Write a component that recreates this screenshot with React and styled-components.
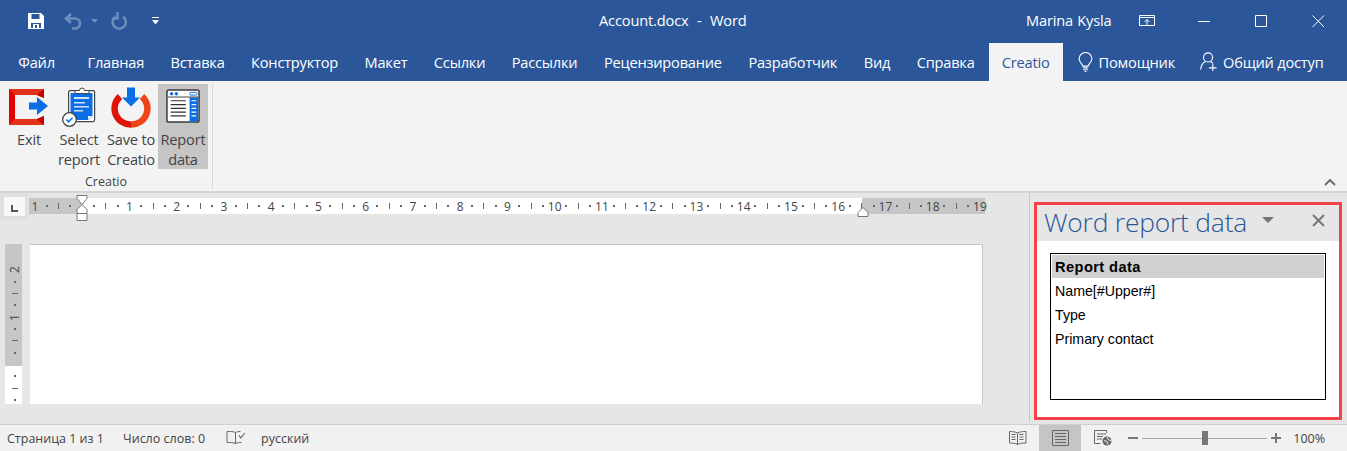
import styled, { createGlobalStyle } from 'styled-components';

const GlobalStyle = createGlobalStyle`
  html, body {
    margin: 0;
    padding: 0;
    background: #e6e6e6;
  }
  * {
    box-sizing: border-box;
  }
`;

const UI_FONT = `'Open Sans', 'Noto Sans', sans-serif`;
const ARIAL = `'Liberation Sans', Arial, sans-serif`;

const tabs = ['Главная', 'Вставка', 'Конструктор', 'Макет', 'Ссылки', 'Рассылки', 'Рецензирование', 'Разработчик', 'Вид', 'Справка'];

const Window = styled.div`
  width: 1347px;
  height: 451px;
  display: flex;
  flex-direction: column;
  overflow: hidden;
  font-family: ${UI_FONT};
`;

const TitleBar = styled.div`
  height: 42px;
  flex: none;
  background: #2b579a;
  color: #fff;
  display: flex;
  align-items: center;
  font-size: 14.6px;
`;

const TitleIcon = styled.span`
  display: flex;
  margin-left: ${(p) => p.$left}px;
  opacity: ${(p) => p.$faded ? 0.32 : 1};
`;

const TitleText = styled.span`
  margin-left: ${(p) => p.$left}px;
  margin-top: -2px;
  width: ${(p) => p.$width}px;
  white-space: pre;
  letter-spacing: -0.15px;
  word-spacing: 0.6px;
`;

const TabBar = styled.div`
  height: 39px;
  flex: none;
  background: #2b579a;
  display: flex;
  align-items: stretch;
  padding-left: 5px;
`;

const Tab = styled.div`
  padding: 0 ${(p) => p.$right ?? 13.25}px 0 ${(p) => p.$pad ?? 13.25}px;
  margin-top: ${(p) => p.$active ? 1 : 0}px;
  margin-left: ${(p) => p.$left ?? 0}px;
  display: flex;
  align-items: center;
  gap: ${(p) => p.$gap ?? 0}px;
  font-size: 14.6px;
  letter-spacing: -0.2px;
  white-space: nowrap;
  color: ${(p) => p.$active ? '#2b579a' : '#fff'};
  background: ${(p) => p.$active ? '#f3f3f3' : 'transparent'};
`;

const Ribbon = styled.div`
  height: 112px;
  flex: none;
  background: #f3f3f3;
  border-bottom: 2px solid #d4d4d4;
  display: flex;
  justify-content: space-between;
  padding: 3px 0 0 0;
`;

const RibbonGroup = styled.div`
  width: 213px;
  height: 105px;
  border-right: 1px solid #d9d9d9;
  display: flex;
  flex-direction: column;
`;

const RibbonButtons = styled.div`
  display: flex;
  padding-left: 8px;
  height: 85px;
`;

const RibbonButton = styled.div`
  width: ${(p) => p.$width}px;
  margin-left: ${(p) => p.$left ?? 0}px;
  height: 85px;
  display: flex;
  flex-direction: column;
  align-items: center;
  background: ${(p) => p.$active ? '#c5c5c5' : 'transparent'};
  color: #444;
  font-size: 14.6px;
  line-height: 20px;
  letter-spacing: -0.2px;
  text-align: center;
  white-space: nowrap;
`;

const RibbonIcon = styled.div`
  height: 45px;
  flex: none;
  display: flex;
  align-items: flex-start;
  justify-content: center;
  padding-top: ${(p) => p.$top ?? 3}px;
`;

const GroupLabel = styled.div`
  text-align: center;
  font-size: 12.5px;
  line-height: 16px;
  margin-top: 5px;
  color: #444;
`;

const Collapse = styled.div`
  align-self: flex-end;
  padding: 0 11px 5px 0;
  display: flex;
`;

const Main = styled.div`
  flex: 1;
  display: flex;
  background: #e6e6e6;
  min-height: 0;
`;

const DocArea = styled.div`
  width: 1029px;
  flex: none;
  position: relative;
  display: flex;
  flex-direction: column;
`;

const RulerRow = styled.div`
  display: flex;
  height: 30px;
  align-items: flex-start;
`;

const TabStop = styled.div`
  width: 28px;
  height: 27px;
  margin-right: 1px;
  background: #e0e0e0;
  padding: 4px;
`;

const TabStopInner = styled.div`
  width: 21px;
  height: 19px;
  background: #f8f8f8;
  display: flex;
  align-items: flex-end;
  padding: 0 0 4px 7px;
`;

const CornerMark = styled.div`
  width: 7px;
  height: 7px;
  border-left: 2px solid #555;
  border-bottom: 2px solid #555;
`;

const HRuler = styled.div`
  width: 956px;
  height: 16px;
  margin-top: 5px;
  position: relative;
  display: flex;
  overflow: visible;
  background: linear-gradient(to right, #c6c6c6 53px, #fff 53px, #fff 833px, #c6c6c6 833px);
`;

const RulerCell = styled.span`
  flex: none;
  width: 11.8125px;
  height: 16px;
  display: flex;
  align-items: center;
  justify-content: center;
  font-size: 12px;
  color: #444;
`;

const Dot = styled.i`
  width: 2px;
  height: 2px;
  background: #666;
  display: block;
`;

const Tick = styled.i`
  width: 1px;
  height: 6px;
  background: #666;
  display: block;
`;

const Marker = styled.svg`
  position: absolute;
  top: -3px;
  left: ${(p) => p.$left}px;
`;

const DocRow = styled.div`
  display: flex;
  margin-top: 21px;
  height: 160px;
`;

const VRuler = styled.div`
  width: 17px;
  margin: 0 8px 0 5px;
  height: 160px;
  display: flex;
  flex-direction: column;
  align-items: center;
  background: linear-gradient(to bottom, #c6c6c6 122px, #fff 122px);
  padding: 20px 0 0 2px;
  flex: none;
`;

const VCell = styled.span`
  flex: none;
  width: 15px;
  height: 11.8125px;
  display: flex;
  align-items: center;
  justify-content: center;
  font-size: 12px;
  color: #444;
`;

const VNumber = styled.span`
  display: block;
  transform: rotate(-90deg);
`;

const VDot = styled.i`
  width: 2px;
  height: 2px;
  background: #666;
  display: block;
`;

const VTick = styled.i`
  width: 6px;
  height: 1px;
  background: #666;
  display: block;
`;

const Page = styled.div`
  width: 953px;
  height: 160px;
  background: #fff;
  border-top: 1px solid #c6c6c6;
  border-right: 1px solid #c6c6c6;
`;

const PaneWrap = styled.div`
  flex: 1;
  border-left: 1px solid #c6c6c6;
  padding: 9px 5px 4px 4px;
  height: 229px;
`;

const Pane = styled.div`
  height: 218px;
  border: 3px solid #f34349;
  background: #fff;
  display: flex;
  flex-direction: column;
`;

const PaneHead = styled.div`
  height: 36px;
  background: #e6e6e6;
  display: flex;
  align-items: center;
  padding: 0 14px 0 7px;
`;

const PaneTitle = styled.div`
  font-size: 26.4px;
  font-weight: 300;
  color: #2b579a;
  letter-spacing: -0.2px;
  white-space: nowrap;
  line-height: 36px;
  margin-top: -3px;
`;

const PaneMenu = styled.div`
  width: 0;
  height: 0;
  margin: -6px 0 0 15px;
  border-left: 6px solid transparent;
  border-right: 6px solid transparent;
  border-top: 6px solid #767676;
`;

const PaneClose = styled.svg`
  margin: -5px 0 0 auto;
`;

const PaneBody = styled.div`
  flex: 1;
  padding: 12px 13px 17px 13px;
`;

const DataTable = styled.div`
  height: 147px;
  border: 1px solid #000;
  padding: 1px;
  font-family: ${ARIAL};
  font-size: 14.2px;
  color: #000;
`;

const DataHead = styled.div`
  height: 23px;
  line-height: 24px;
  padding-left: 3px;
  font-weight: 700;
  font-size: 14.67px;
  letter-spacing: 0.4px;
  background: #d0d0d0;
`;

const DataRow = styled.div`
  height: 24px;
  line-height: 27px;
  padding-left: 3px;
`;

const StatusBar = styled.div`
  height: 27px;
  flex: none;
  background: #f1f1f1;
  border-top: 1px solid #cfcfcf;
  display: flex;
  align-items: center;
  font-size: 12.5px;
  color: #444;
`;

const StatusText = styled.span`
  margin-left: ${(p) => p.$left}px;
  white-space: nowrap;
`;

const StatusIcon = styled.span`
  display: flex;
  margin-left: ${(p) => p.$left}px;
`;

const ViewButton = styled.span`
  width: 42px;
  height: 26px;
  margin-left: 12px;
  display: flex;
  align-items: center;
  justify-content: center;
  background: #c5c5c5;
`;

const ZoomMark = styled.span`
  margin-left: ${(p) => p.$left}px;
  width: 10px;
  height: 10px;
  flex: none;
  position: relative;
  display: flex;
  align-items: center;
`;

const ZoomBar = styled.span`
  width: 10px;
  height: 2px;
  background: #777;
`;

const ZoomStem = styled.span`
  position: absolute;
  left: 4px;
  top: 0;
  width: 2px;
  height: 10px;
  background: #777;
`;

const ZoomTrack = styled.div`
  width: 125px;
  height: 1px;
  margin-left: 4px;
  background: #a8a8a8;
  position: relative;
`;

const ZoomThumb = styled.div`
  position: absolute;
  left: 60px;
  top: -7px;
  width: 6px;
  height: 14px;
  background: #777;
`;

const SaveIcon = () => (
  <svg width="18" height="18" viewBox="0 0 18 18">
    <path d="M1 1h13l3 3v13H1z" fill="#fff" />
    <path d="M4.500 2h8v5h-8z" fill="#2b579a" />
    <path d="M4 11h10v5H4z" fill="#2b579a" />
    <path d="M6 12h6v4H6z" fill="#fff" />
    <path d="M8 13h2v3H8z" fill="#2b579a" />
  </svg>
);

const UndoIcon = () => (
  <svg width="19" height="18" viewBox="0 0 19 18" fill="none" stroke="#fff" strokeWidth="2.600">
    <path d="M7 2 2 6.500 7 11" />
    <path d="M3 6.500h8a5 5 0 0 1 5 5 5 5 0 0 1-5 5H8" />
  </svg>
);

const RedoIcon = () => (
  <svg width="18" height="18" viewBox="0 0 19 18" fill="none" stroke="#fff" strokeWidth="2.600">
    <path d="M6 4.200a7 7 0 1 0 8 .3" />
    <path d="M8 0v7H2" transform="translate(0 -0.5)" />
  </svg>
);

const SmallCaret = () => (
  <svg width="7" height="4" viewBox="0 0 7 4"><path d="M0 0h7L3.500 4z" fill="#fff" /></svg>
);

const CustomizeIcon = () => (
  <svg width="7" height="8" viewBox="0 0 7 8" fill="#fff">
    <path d="M0 0h7v1H0z" />
    <path d="M0 3h7L3.500 7.500z" />
  </svg>
);

const DisplayIcon = () => (
  <svg width="16" height="12" viewBox="0 0 16 12" fill="none" stroke="#fff">
    <path d="M.5.500h15v10H.5zM.5 2.500h15" />
    <path d="M8 10V4.500M5.500 7 8 4.500 10.500 7" />
  </svg>
);

const MinIcon = () => (
  <svg width="13" height="12" viewBox="0 0 13 12"><path d="M0 6.500h12" stroke="#fff" /></svg>
);

const MaxIcon = () => (
  <svg width="13" height="13" viewBox="0 0 13 13"><path d="M.5.500h11v11H.5z" fill="none" stroke="#fff" /></svg>
);

const CloseIcon = () => (
  <svg width="13" height="13" viewBox="0 0 13 13"><path d="M.5.500l11.500 11.500M12 .5.500 12" fill="none" stroke="#fff" /></svg>
);

const BulbIcon = () => (
  <svg width="15" height="20" viewBox="0 0 16 22" fill="none" stroke="#fff" strokeWidth="1.200">
    <path d="M5 15.500C4.500 12.500 1 11.500 1 7.500a7 7 0 0 1 14 0c0 4-3.500 5-4 8z" />
    <path d="M5.500 17.500h5M5.500 19.500h5M7 21.500h2" />
  </svg>
);

const ShareIcon = () => (
  <svg width="19" height="19" viewBox="0 0 19 21" fill="none" stroke="#fff" strokeWidth="1.200">
    <circle cx="9" cy="6" r="5" />
    <path d="M.8 19.500c.5-5 3-8 5.500-9M11.500 10.500c1 .4 2 1 2.800 2" />
    <path d="M10 17.500h8.500M14.300 13v8.500" />
  </svg>
);

const ExitIcon = () => (
  <svg width="40" height="36" viewBox="0 0 40 36">
    <path d="M0 0h35v9l-7-3H6v24h22l7-3v9H0z" fill="#e60000" />
    <path d="M0 0h35l-7 6H6z" fill="#e2321a" />
    <path d="M0 36h35l-7-6H6z" fill="#e2321a" />
    <path d="M35 0v9l-7-3z" fill="#c40000" />
    <path d="M35 36v-9l-7 3z" fill="#c40000" />
    <path d="M20 13.500h8V8l11 9-11 9v-5.500h-8z" fill="#0a6ee6" />
  </svg>
);

const SelectIcon = () => (
  <svg width="34" height="40" viewBox="0 0 34 40">
    <rect x="6.600" y="3.600" width="26" height="31" rx="1.500" fill="#fff" stroke="#444" strokeWidth="1.200" />
    <path d="M8.500 6h22v23l-4 4h-18z" fill="#0a6ee6" />
    <path d="M12 10h15v2H12zM12 15h11v1.500H12zM12 19h15v1.500H12zM12 23h9v1.500h-9z" fill="#cfe4fb" />
    <path d="M26 33v-4h4z" fill="#fff" />
    <path d="M13 3.500h4.500a2.500 2.500 0 0 1 5 0H27v3H13z" fill="#fff" stroke="#444" />
    <circle cx="7.500" cy="32.500" r="6.800" fill="#fff" stroke="#444" strokeWidth="1.300" />
    <path d="M4.300 32.500l2.300 2.300 4-4" fill="none" stroke="#0a6ee6" strokeWidth="1.600" />
  </svg>
);

const SaveToIcon = () => (
  <svg width="40" height="41" viewBox="0 0 40 41">
    <path d="M9 9.500A16 16 0 0 0 20 37.500" fill="none" stroke="#e0150a" strokeWidth="6.500" />
    <path d="M20 37.500A16 16 0 0 0 31 9.500" fill="none" stroke="#ef4418" strokeWidth="6.500" />
    <path d="M16 .5h8v10h5L20 19.500 11 10.500h5z" fill="#0a6ee6" />
  </svg>
);

const ReportIcon = () => (
  <svg width="34" height="34" viewBox="0 0 36 36">
    <rect x="1" y="1" width="34" height="34" rx="2" fill="#fff" stroke="#3c3c3c" strokeWidth="1.600" />
    <path d="M25 9h9v24.500a1 1 0 0 1-1 1h-8z" fill="#0a6ee6" />
    <circle cx="6" cy="5" r="1.800" fill="#0a6ee6" />
    <circle cx="11" cy="5" r="1.800" fill="#0a6ee6" />
    <rect x="25" y="3.500" width="8" height="3" rx="1.500" fill="#fff" stroke="#0a6ee6" />
    <path d="M2 8.500h32" stroke="#3c3c3c" />
    <path d="M5 12.500h16M5 16.500h16M5 20.500h16M5 24.500h16M5 28.500h16" stroke="#333" strokeWidth="1.200" />
    <path d="M27 12.500h5M27 16.500h5M27 20.500h5M27 24.500h5M27 28.500h5" stroke="#fff" strokeWidth="1.200" />
  </svg>
);

const ProofIcon = () => (
  <svg width="20" height="16" viewBox="0 0 20 16" fill="none" stroke="#666">
    <path d="M9.500 2.500C8 1.500 4 1.500 1 1.500v11c3 0 6.500 0 8.500 1zM9.500 2.500c1-.6 3-1 5-1M9.500 13.500c1-.6 3-1 6-1" />
    <path d="M13 5.500l2 2.500 3.500-5" stroke="#777" strokeWidth="1.300" />
  </svg>
);

const ReadIcon = () => (
  <svg width="18" height="15" viewBox="0 0 18 15" fill="none" stroke="#666">
    <path d="M8.500 2C6.500.8 3 .5.500.5v11.500c3 0 6 .3 8 1.500 2-1.200 5-1.500 8.500-1.500V.5C14 .5 10.500.8 8.500 2zM8.500 2v11.500" />
    <path d="M2.500 3.500h4M2.500 6h4M2.500 8.500h4M10.500 3.500h4M10.500 6h4M10.500 8.500h4" />
  </svg>
);

const PrintIcon = () => (
  <svg width="18" height="16" viewBox="0 0 18 16" fill="none" stroke="#666">
    <path d="M.5.500h12v2.500M.5.500V13.500h6" />
    <path d="M3 4h9M3 6.500h6M3 9h5" />
    <circle cx="13" cy="11" r="4.500" fill="#666" stroke="none" />
    <path d="M10 10.500l3 1 1 3M13 7l1.500 3 3 .5" stroke="#f1f1f1" />
  </svg>
);

const PrintLayoutIcon = () => (
  <svg width="17" height="16" viewBox="0 0 17 16" fill="none" stroke="#666">
    <path d="M.5.500h16v15H.5z" />
    <path d="M3 3.500h11M3 6.500h11M3 9.500h11M3 12.500h11" />
  </svg>
);

const rulerMarks = () => {
  // one cm = 4 cells: number, dot, tick, dot
  const numbers = [1, 0, 1, 2, 3, 4, 5, 6, 7, 8, 9, 10, 11, 12, 13, 14, 15, 16, 17, 18, 19];
  const cells = [];
  numbers.forEach((n, i) => {
    cells.push(<RulerCell key={`n${i}`}>{i === 1 ? '' : n}</RulerCell>);
    if (i < numbers.length - 1) {
      cells.push(<RulerCell key={`a${i}`}><Dot /></RulerCell>);
      cells.push(<RulerCell key={`b${i}`}><Tick /></RulerCell>);
      cells.push(<RulerCell key={`c${i}`}><Dot /></RulerCell>);
    }
  });
  return cells;
};

const verticalMarks = () => {
  const seq = ['2', 'd', 't', 'd', '1', 'd', 't', 'd', '', 'd', 't', 'd'];
  return seq.map((m, i) => (
    <VCell key={i}>
      {m === 'd' && <VDot />}
      {m === 't' && <VTick />}
      {m !== 'd' && m !== 't' && <VNumber>{m}</VNumber>}
    </VCell>
  ));
};

export default function App() {
  return (
    <>
      <GlobalStyle />
      <Window>
        <TitleBar>
          <TitleIcon $left={27}><SaveIcon /></TitleIcon>
          <TitleIcon $left={19} $faded><UndoIcon /></TitleIcon>
          <TitleIcon $left={8} $faded><SmallCaret /></TitleIcon>
          <TitleIcon $left={12} $faded><RedoIcon /></TitleIcon>
          <TitleIcon $left={24}><CustomizeIcon /></TitleIcon>
          <TitleText $left={440} $width={427}>{'Account.docx  -  Word'}</TitleText>
          <TitleText $left={0} $width={113}>Marina Kysla</TitleText>
          <TitleIcon $left={0}><DisplayIcon /></TitleIcon>
          <TitleIcon $left={43}><MinIcon /></TitleIcon>
          <TitleIcon $left={44}><MaxIcon /></TitleIcon>
          <TitleIcon $left={44}><CloseIcon /></TitleIcon>
        </TitleBar>
        <TabBar>
          <Tab $right={19.5}>Файл</Tab>
          {tabs.map((t) => <Tab key={t}>{t}</Tab>)}
          <Tab $active $pad={12.5} $right={13} $left={1.5}>Creatio</Tab>
          <Tab $gap={6} $pad={15} $right={0}><BulbIcon />Помощник</Tab>
          <Tab $gap={5} $pad={0} $right={0} $left={24}><ShareIcon />Общий доступ</Tab>
        </TabBar>
        <Ribbon>
          <RibbonGroup>
            <RibbonButtons>
              <RibbonButton $width={42}>
                <RibbonIcon $top={5}><ExitIcon /></RibbonIcon>
                Exit
              </RibbonButton>
              <RibbonButton $width={42} $left={8}>
                <RibbonIcon><SelectIcon /></RibbonIcon>
                Select<br />report
              </RibbonButton>
              <RibbonButton $width={50} $left={6}>
                <RibbonIcon><SaveToIcon /></RibbonIcon>
                Save to<br />Creatio
              </RibbonButton>
              <RibbonButton $width={50} $left={2} $active>
                <RibbonIcon $top={5}><ReportIcon /></RibbonIcon>
                Report<br />data
              </RibbonButton>
            </RibbonButtons>
            <GroupLabel>Creatio</GroupLabel>
          </RibbonGroup>
          <Collapse>
            <svg width="12" height="7" viewBox="0 0 12 7"><path d="M1 6l5-5 5 5" fill="none" stroke="#666" strokeWidth="1.800" /></svg>
          </Collapse>
        </Ribbon>
        <Main>
          <DocArea>
            <RulerRow>
              <TabStop><TabStopInner><CornerMark /></TabStopInner></TabStop>
              <HRuler>
                {rulerMarks()}
                <Marker $left={47} width="12" height="27" viewBox="0 0 12 27" fill="#fff" stroke="#777">
                  <path d="M1 .5h10v3L6 9.500 1 3.500z" />
                  <path d="M6 9.500l5 5v4H1v-4z" />
                  <path d="M1 18.500h10v7H1z" />
                </Marker>
                <Marker $left={828} width="12" height="24" viewBox="0 0 12 24" fill="#fff" stroke="#777">
                  <path d="M6 12.500l5 5v4H1v-4z" />
                </Marker>
              </HRuler>
            </RulerRow>
            <DocRow>
              <VRuler>{verticalMarks()}</VRuler>
              <Page />
            </DocRow>
          </DocArea>
          <PaneWrap>
            <Pane>
              <PaneHead>
                <PaneTitle>Word report data</PaneTitle>
                <PaneMenu />
                <PaneClose width="13" height="13" viewBox="0 0 13 13">
                  <path d="M1 1l11 11M12 1 1 12" fill="none" stroke="#767676" strokeWidth="2" />
                </PaneClose>
              </PaneHead>
              <PaneBody>
                <DataTable>
                  <DataHead>Report data</DataHead>
                  <DataRow>Name[#Upper#]</DataRow>
                  <DataRow>Type</DataRow>
                  <DataRow>Primary contact</DataRow>
                </DataTable>
              </PaneBody>
            </Pane>
          </PaneWrap>
        </Main>
        <StatusBar>
          <StatusText $left={7}>Страница 1 из 1</StatusText>
          <StatusText $left={19}>Число слов: 0</StatusText>
          <StatusIcon $left={21}><ProofIcon /></StatusIcon>
          <StatusText $left={15}>русский</StatusText>
          <StatusIcon $left={700}><ReadIcon /></StatusIcon>
          <ViewButton><PrintLayoutIcon /></ViewButton>
          <StatusIcon $left={13}><PrintIcon /></StatusIcon>
          <ZoomMark $left={16}><ZoomBar /></ZoomMark>
          <ZoomTrack><ZoomThumb /></ZoomTrack>
          <ZoomMark $left={4}><ZoomBar /><ZoomStem /></ZoomMark>
          <StatusText $left={12}>100%</StatusText>
        </StatusBar>
      </Window>
    </>
  );
}
